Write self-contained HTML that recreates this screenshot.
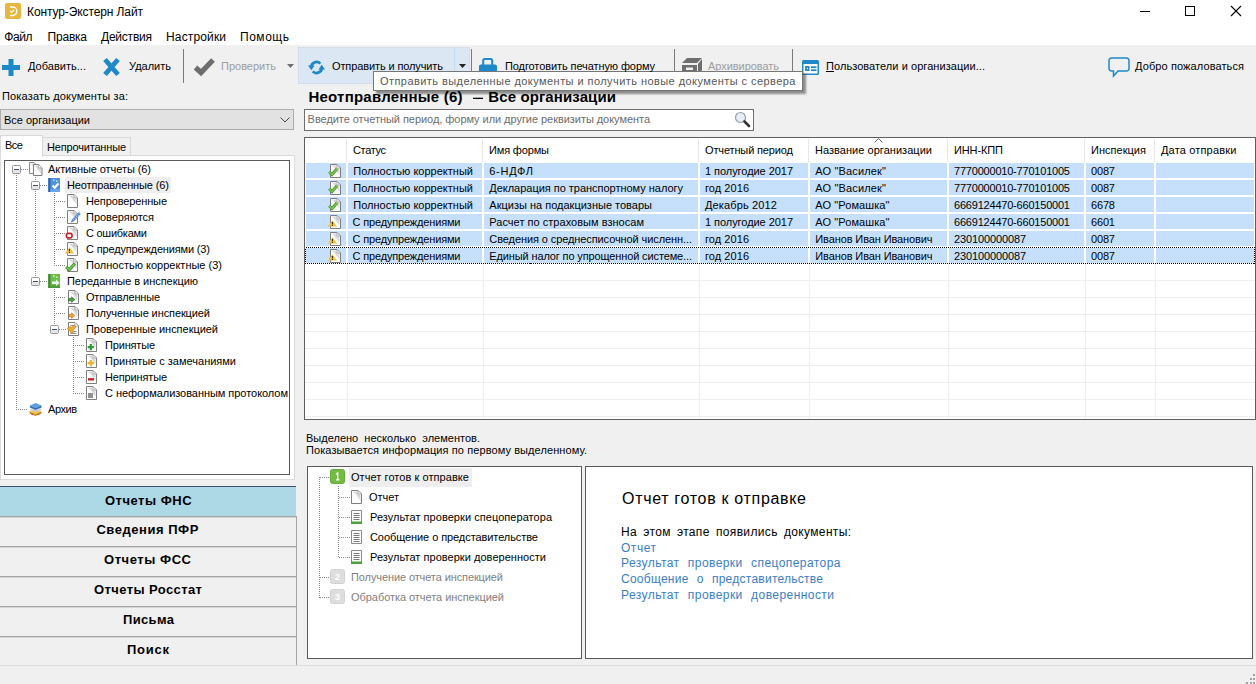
<!DOCTYPE html>
<html><head><meta charset="utf-8"><title>Контур-Экстерн Лайт</title>
<style>
html,body{margin:0;padding:0;}
body{width:1256px;height:684px;position:relative;overflow:hidden;background:#f0f0f0;font-family:"Liberation Sans", sans-serif;}
#root{position:absolute;left:0;top:0;width:1256px;height:684px;overflow:hidden;}
#root div{position:absolute;box-sizing:border-box;}
#root svg{position:absolute;overflow:visible;}
.t{position:absolute;white-space:pre;}
</style></head><body><div id="root">
<div style="left:0px;top:0px;width:1256px;height:45px;background:#fff"></div>
<div style="left:0px;top:45px;width:1256px;height:639px;background:#f0f0f0"></div>
<svg style="left:5px;top:3px" width="16" height="16" viewBox="0 0 16 16"><rect x="0" y="0" width="16" height="16" rx="2" fill="#e6b73c"/><path d="M5 4h2.500a4.300 4.300 0 0 1 0 8.600H5" fill="none" stroke="#fff" stroke-width="1.500"/><path d="M5.300 8l1.400 1.300 2.300-2.300" fill="none" stroke="#fff" stroke-width="1.200"/></svg>
<svg style="left:1140px;top:5px" width="12" height="12"><path d="M0 6.5H10" stroke="#000" stroke-width="1"/></svg>
<svg style="left:1185px;top:6px" width="12" height="12"><rect x="0.5" y="0.5" width="9" height="9" fill="none" stroke="#000" stroke-width="1"/></svg>
<svg style="left:1231px;top:6px" width="12" height="12"><path d="M0 0L10 10M10 0L0 10" stroke="#000" stroke-width="1.1"/></svg>
<div style="left:298px;top:47px;width:172px;height:37px;background:#dbe7f3;border:1px dotted #c3d8f0"></div>
<div style="left:454px;top:48px;width:1px;height:35px;background:#c6daf0"></div>
<div style="left:183px;top:49px;width:1px;height:34px;background:#7a7a7a"></div>
<div style="left:471px;top:49px;width:1px;height:34px;background:#7a7a7a"></div>
<div style="left:674px;top:49px;width:1px;height:34px;background:#7a7a7a"></div>
<div style="left:792px;top:49px;width:1px;height:34px;background:#7a7a7a"></div>
<svg style="left:2px;top:59px" width="18" height="17"><path d="M6.5 0h5v6h6.5v5h-6.5v6h-5v-6H0v-5h6.5z" fill="#1e88c9"/></svg>
<svg style="left:103px;top:59px" width="17" height="16"><path d="M2 0.5L15 15.5M15 0.5L2 15.5" stroke="#1e88c9" stroke-width="4.8"/></svg>
<svg style="left:194px;top:58px" width="21" height="17"><path d="M1.5 9.5L7 14.5L19 2" stroke="#6e6e6e" stroke-width="5.2" fill="none"/></svg>
<svg style="left:287px;top:64px" width="8" height="5"><path d="M0 0h7L3.5 4z" fill="#707070"/></svg>
<svg style="left:308px;top:59px" width="18" height="17" viewBox="0 0 18 17"><path d="M3.200 8.500A5.300 5.300 0 0 1 12.300 4.600" stroke="#1e88c9" stroke-width="2.800" fill="none"/><path d="M0 6.500h6.600L3.300 11.300z" fill="#1e88c9"/><path d="M13.800 8.500A5.300 5.300 0 0 1 4.700 12.400" stroke="#1e88c9" stroke-width="2.800" fill="none"/><path d="M10.400 10.500H17L13.700 5.700z" fill="#1e88c9"/></svg>
<svg style="left:459px;top:64px" width="8" height="5"><path d="M0 0h7L3.5 4z" fill="#222"/></svg>
<svg style="left:479px;top:57px" width="19" height="18" viewBox="0 0 19 18"><path d="M4.200 8V3.500a1.500 1.500 0 0 1 1.500-1.500h6a1.500 1.500 0 0 1 1.500 1.500V8" fill="#f0f0f0" stroke="#1e88c9" stroke-width="2"/><rect x="0" y="7.500" width="18" height="8.500" rx="1.800" fill="#1e88c9"/></svg>
<svg style="left:681px;top:57px" width="21" height="18" viewBox="0 0 21 18"><path d="M1 6L6 1h15l-5 5z" fill="#6e6e6e"/><path d="M1 8h15v10H1z" fill="#6e6e6e"/><path d="M17 7l4-5v11l-4 5z" fill="#6e6e6e"/><rect x="5" y="10.5" width="7" height="2.5" fill="#f0f0f0"/></svg>
<svg style="left:802px;top:60px" width="17" height="15" viewBox="0 0 17 15"><rect x="0" y="0" width="17" height="15" rx="1.500" fill="#1e88c9"/><rect x="1.500" y="4" width="14" height="9.500" fill="#fff"/><rect x="3" y="6" width="4.500" height="5" fill="#1e88c9"/><rect x="4.700" y="7.800" width="1.200" height="1.400" fill="#fff"/><rect x="9" y="6.300" width="5.500" height="1.800" fill="#1e88c9"/><rect x="9" y="9.300" width="5.500" height="1.800" fill="#1e88c9"/></svg>
<svg style="left:1108px;top:57px" width="22" height="21" viewBox="0 0 22 21"><path d="M3.5 1h15a2.5 2.5 0 0 1 2.5 2.5v8a2.5 2.5 0 0 1-2.5 2.5H10l-4.5 5v-5h-2A2.5 2.5 0 0 1 1 11.500v-8A2.5 2.500 0 0 1 3.5 1z" fill="none" stroke="#1e88c9" stroke-width="1.5"/></svg>
<div style="left:0px;top:109px;width:294px;height:21px;background:#e2e2e2;border:1px solid #adadad"></div>
<svg style="left:280px;top:117px" width="10" height="6"><path d="M0.500 0.500L5 5L9.500 0.500" stroke="#444" stroke-width="1" fill="none"/></svg>
<div style="left:0px;top:155px;width:295px;height:325px;background:#fff;border:1px solid #dcdcdc;border-top:1px solid #d9d9d9"></div>
<div style="left:42px;top:137px;width:89px;height:19px;background:#f0f0f0;border:1px solid #d9d9d9"></div>
<div style="left:0px;top:135px;width:43px;height:22px;background:#fff;border:1px solid #d9d9d9;border-bottom:0"></div>
<div style="left:4px;top:160px;width:286px;height:315px;background:#fff;border:1px solid #5a5a5a"></div>
<div style="left:65px;top:177px;width:106px;height:16px;background:#eeeeee"></div>
<div style="left:16px;top:175px;width:1px;height:235px;background:repeating-linear-gradient(to bottom,#8a8a8a 0 1px,transparent 1px 2px)"></div>
<div style="left:35px;top:177px;width:1px;height:105px;background:repeating-linear-gradient(to bottom,#8a8a8a 0 1px,transparent 1px 2px)"></div>
<div style="left:54px;top:193px;width:1px;height:73px;background:repeating-linear-gradient(to bottom,#8a8a8a 0 1px,transparent 1px 2px)"></div>
<div style="left:54px;top:289px;width:1px;height:41px;background:repeating-linear-gradient(to bottom,#8a8a8a 0 1px,transparent 1px 2px)"></div>
<div style="left:73px;top:337px;width:1px;height:57px;background:repeating-linear-gradient(to bottom,#8a8a8a 0 1px,transparent 1px 2px)"></div>
<div style="left:21px;top:169px;width:7px;height:1px;background:repeating-linear-gradient(to right,#8a8a8a 0 1px,transparent 1px 2px)"></div>
<svg style="left:12px;top:165px" width="9" height="9"><rect x="0.5" y="0.5" width="8" height="8" rx="1" fill="#fff" stroke="#969696"/><rect x="1" y="5" width="7" height="3" fill="#e6e6e6"/><path d="M2 4.5h5" stroke="#3d4f74"/></svg>
<svg style="left:29px;top:161px" width="16" height="16" viewBox="0 0 16 16"><path d="M0.500 1.500h4.500l2.500 2.500v8.500h-7z" fill="#fcfcfc" stroke="#8a8a8a"/><path d="M1.500 2.500h3l2 2.500v4z" fill="#dcdcdc"/><path d="M4.500 3.500h5l3.500 3.500v7.500h-8.500z" fill="#fcfcfc" stroke="#7f7f7f"/><path d="M5.500 4.500h4l2.500 3v5l-4-5z" fill="#d9dadc"/><path d="M9.500 3.500v3.500h3.500z" fill="#fff" stroke="#9a9a9a" stroke-width="0.7"/></svg>
<div style="left:40px;top:185px;width:7px;height:1px;background:repeating-linear-gradient(to right,#8a8a8a 0 1px,transparent 1px 2px)"></div>
<svg style="left:31px;top:181px" width="9" height="9"><rect x="0.5" y="0.5" width="8" height="8" rx="1" fill="#fff" stroke="#969696"/><rect x="1" y="5" width="7" height="3" fill="#e6e6e6"/><path d="M2 4.5h5" stroke="#3d4f74"/></svg>
<svg style="left:48px;top:177px" width="16" height="16" viewBox="0 0 16 16"><rect x="0.500" y="1" width="11.500" height="14" fill="#4f93e0"/><rect x="0.500" y="1" width="2" height="14" fill="#2f6bbd"/><path d="M0 2h1.500M0 4h1.500M0 6h1.500M0 8h1.500M0 10h1.500M0 12h1.500M0 14h1.500" stroke="#1d4f94" stroke-width="0.8"/><rect x="2.500" y="12" width="9.500" height="3" fill="#6aa6ea"/><path d="M4.500 8.500l2.200 2.200L10.500 6.500" stroke="#fff" stroke-width="2.200" fill="none"/><rect x="5" y="2.500" width="1.500" height="1.500" fill="#cfe6ff"/><rect x="8" y="3.500" width="1.500" height="1.500" fill="#cfe6ff"/></svg>
<div style="left:54px;top:201px;width:12px;height:1px;background:repeating-linear-gradient(to right,#8a8a8a 0 1px,transparent 1px 2px)"></div>
<svg style="left:67px;top:193px" width="16" height="16" viewBox="0 0 16 16"><path d="M0.500 1.500h6.500l3.500 3.500v9.500h-10z" fill="#fcfcfc" stroke="#7f7f7f"/><path d="M1.500 2.500h5.500l2.500 3v6l-5-6.500z" fill="#d9dadc"/><path d="M7 1.500v3.500h3.500z" fill="#fff" stroke="#9a9a9a" stroke-width="0.7"/></svg>
<div style="left:54px;top:217px;width:12px;height:1px;background:repeating-linear-gradient(to right,#8a8a8a 0 1px,transparent 1px 2px)"></div>
<svg style="left:67px;top:209px" width="16" height="16" viewBox="0 0 16 16"><path d="M0.500 1.500h6.500l3.500 3.500v9.500h-10z" fill="#fcfcfc" stroke="#7f7f7f"/><path d="M1.500 2.500h5.500l2.500 3v6l-5-6.500z" fill="#d9dadc"/><path d="M7 1.500v3.500h3.500z" fill="#fff" stroke="#9a9a9a" stroke-width="0.7"/><path d="M4.300 13.200l1-2.800 6.500-7 1.600 1.500-6.500 7z" fill="#5b8fdc" stroke="#3a6ab8" stroke-width="0.5"/><path d="M6 10l1.500 1.500M7.500 8.500L9 10M9 7l1.500 1.500M10.500 5.500L12 7" stroke="#cfe0f7" stroke-width="0.6"/></svg>
<div style="left:54px;top:233px;width:12px;height:1px;background:repeating-linear-gradient(to right,#8a8a8a 0 1px,transparent 1px 2px)"></div>
<svg style="left:67px;top:225px" width="16" height="16" viewBox="0 0 16 16"><path d="M0.500 1.500h6.500l3.500 3.500v9.500h-10z" fill="#fcfcfc" stroke="#7f7f7f"/><path d="M1.500 2.500h5.500l2.500 3v6l-5-6.500z" fill="#d9dadc"/><path d="M7 1.500v3.500h3.500z" fill="#fff" stroke="#9a9a9a" stroke-width="0.7"/><rect x="-0.600" y="8.300" width="5.600" height="4.600" rx="1.600" fill="#fff" stroke="#c8202a" stroke-width="1.700"/></svg>
<div style="left:54px;top:249px;width:12px;height:1px;background:repeating-linear-gradient(to right,#8a8a8a 0 1px,transparent 1px 2px)"></div>
<svg style="left:67px;top:241px" width="16" height="16" viewBox="0 0 16 16"><path d="M0.500 1.500h6.500l3.500 3.500v9.500h-10z" fill="#fcfcfc" stroke="#7f7f7f"/><path d="M1.500 2.500h5.500l2.500 3v6l-5-6.500z" fill="#d9dadc"/><path d="M7 1.500v3.500h3.500z" fill="#fff" stroke="#9a9a9a" stroke-width="0.7"/><path d="M2.400 6.200L7 12.600H-2.200z" fill="#efc03a"/><rect x="1.900" y="8" width="1.100" height="2.300" fill="#3a2a00"/><rect x="1.900" y="11" width="1.100" height="1" fill="#3a2a00"/></svg>
<div style="left:54px;top:265px;width:12px;height:1px;background:repeating-linear-gradient(to right,#8a8a8a 0 1px,transparent 1px 2px)"></div>
<svg style="left:67px;top:257px" width="16" height="16" viewBox="0 0 16 16"><path d="M0.500 1.500h6.500l3.500 3.500v9.500h-10z" fill="#fcfcfc" stroke="#7f7f7f"/><path d="M1.500 2.500h5.500l2.500 3v6l-5-6.500z" fill="#d9dadc"/><path d="M7 1.500v3.500h3.500z" fill="#fff" stroke="#9a9a9a" stroke-width="0.7"/><path d="M-0.800 9.800L2.300 12.800L7.800 6.500" stroke="#3f8f2f" stroke-width="3" fill="none"/><path d="M-0.800 9.800L2.300 12.800L7.800 6.500" stroke="#7cc655" stroke-width="1.300" fill="none"/></svg>
<div style="left:40px;top:281px;width:7px;height:1px;background:repeating-linear-gradient(to right,#8a8a8a 0 1px,transparent 1px 2px)"></div>
<svg style="left:31px;top:277px" width="9" height="9"><rect x="0.5" y="0.5" width="8" height="8" rx="1" fill="#fff" stroke="#969696"/><rect x="1" y="5" width="7" height="3" fill="#e6e6e6"/><path d="M2 4.5h5" stroke="#3d4f74"/></svg>
<svg style="left:48px;top:273px" width="16" height="16" viewBox="0 0 16 16"><rect x="0.500" y="1" width="11.500" height="14" fill="#6cc04a"/><rect x="0.500" y="1" width="2" height="14" fill="#3f8f2c"/><path d="M0 2h1.500M0 4h1.500M0 6h1.500M0 8h1.500M0 10h1.500M0 12h1.500M0 14h1.500" stroke="#2a6a1c" stroke-width="0.8"/><rect x="2.500" y="12.500" width="9.500" height="2.500" fill="#4f9a3a"/><path d="M4 8.500h4v-2l3.500 3.200L8 13v-2H4z" fill="#f4f8f2"/><rect x="5" y="2.500" width="1.500" height="1.500" fill="#d9f5cc"/><rect x="8" y="3.500" width="1.500" height="1.500" fill="#d9f5cc"/></svg>
<div style="left:54px;top:297px;width:12px;height:1px;background:repeating-linear-gradient(to right,#8a8a8a 0 1px,transparent 1px 2px)"></div>
<svg style="left:68px;top:289px" width="16" height="16" viewBox="0 0 16 16"><path d="M0.500 1.500h6.500l3.500 3.500v9.500h-10z" fill="#fcfcfc" stroke="#7f7f7f"/><path d="M1.500 2.500h5.500l2.500 3v6l-5-6.500z" fill="#d9dadc"/><path d="M7 1.500v3.500h3.500z" fill="#fff" stroke="#9a9a9a" stroke-width="0.7"/><path d="M0.800 9.400h2.800V7.900l3.300 2.700-3.300 2.700v-1.500H0.800z" fill="#4aa23a" stroke="#1f5a1a" stroke-width="0.6"/></svg>
<div style="left:54px;top:313px;width:12px;height:1px;background:repeating-linear-gradient(to right,#8a8a8a 0 1px,transparent 1px 2px)"></div>
<svg style="left:68px;top:305px" width="16" height="16" viewBox="0 0 16 16"><path d="M0.500 1.500h6.500l3.500 3.500v9.500h-10z" fill="#fcfcfc" stroke="#7f7f7f"/><path d="M1.500 2.500h5.500l2.500 3v6l-5-6.500z" fill="#d9dadc"/><path d="M7 1.500v3.500h3.500z" fill="#fff" stroke="#9a9a9a" stroke-width="0.7"/><path d="M0.800 9.400h2.800V7.900l3.300 2.700-3.300 2.700v-1.500H0.800z" fill="#f0a83a" stroke="#b06a10" stroke-width="0.6"/></svg>
<div style="left:59px;top:329px;width:7px;height:1px;background:repeating-linear-gradient(to right,#8a8a8a 0 1px,transparent 1px 2px)"></div>
<svg style="left:50px;top:325px" width="9" height="9"><rect x="0.5" y="0.5" width="8" height="8" rx="1" fill="#fff" stroke="#969696"/><rect x="1" y="5" width="7" height="3" fill="#e6e6e6"/><path d="M2 4.5h5" stroke="#3d4f74"/></svg>
<svg style="left:68px;top:321px" width="16" height="16" viewBox="0 0 16 16"><path d="M0.500 1.500h6.500l3.500 3.500v9.500h-10z" fill="#fcfcfc" stroke="#7f7f7f"/><path d="M7 1.500v3.500h3.500z" fill="#fff" stroke="#9a9a9a" stroke-width="0.7"/><path d="M2.500 4.500h4M2.500 10.500h6M2.500 12.500h6" stroke="#8f8f8f"/><path d="M-1 7.500l3-2 1.500 1 3-2.500 1.500 2-3 3 .5 2.500-2.500 1-1-2.500z" fill="#f0a92e" stroke="#c07a10" stroke-width="0.5"/></svg>
<div style="left:73px;top:345px;width:12px;height:1px;background:repeating-linear-gradient(to right,#8a8a8a 0 1px,transparent 1px 2px)"></div>
<svg style="left:86px;top:337px" width="16" height="16" viewBox="0 0 16 16"><path d="M0.500 1.500h6.500l3.500 3.500v9.500h-10z" fill="#fcfcfc" stroke="#7f7f7f"/><path d="M1.500 2.500h5.500l2.500 3v6l-5-6.500z" fill="#d9dadc"/><path d="M7 1.500v3.500h3.500z" fill="#fff" stroke="#9a9a9a" stroke-width="0.7"/><path d="M3.700 7h2.200v2h2v2.200h-2v2H3.700v-2h-2V9h2z" fill="#2f9a35"/></svg>
<div style="left:73px;top:361px;width:12px;height:1px;background:repeating-linear-gradient(to right,#8a8a8a 0 1px,transparent 1px 2px)"></div>
<svg style="left:86px;top:353px" width="16" height="16" viewBox="0 0 16 16"><path d="M0.500 1.500h6.500l3.500 3.500v9.500h-10z" fill="#fcfcfc" stroke="#7f7f7f"/><path d="M1.500 2.500h5.500l2.500 3v6l-5-6.500z" fill="#d9dadc"/><path d="M7 1.500v3.500h3.500z" fill="#fff" stroke="#9a9a9a" stroke-width="0.7"/><path d="M3.700 7h2.200v2h2v2.200h-2v2H3.700v-2h-2V9h2z" fill="#efb422"/></svg>
<div style="left:73px;top:377px;width:12px;height:1px;background:repeating-linear-gradient(to right,#8a8a8a 0 1px,transparent 1px 2px)"></div>
<svg style="left:86px;top:369px" width="16" height="16" viewBox="0 0 16 16"><path d="M0.500 1.500h6.500l3.500 3.500v9.500h-10z" fill="#fcfcfc" stroke="#7f7f7f"/><path d="M1.500 2.500h5.500l2.500 3v6l-5-6.500z" fill="#d9dadc"/><path d="M7 1.500v3.500h3.500z" fill="#fff" stroke="#9a9a9a" stroke-width="0.7"/><rect x="2" y="9.200" width="6" height="2.300" fill="#c01c24"/></svg>
<div style="left:73px;top:393px;width:12px;height:1px;background:repeating-linear-gradient(to right,#8a8a8a 0 1px,transparent 1px 2px)"></div>
<svg style="left:86px;top:385px" width="16" height="16" viewBox="0 0 16 16"><path d="M0.500 1.500h6.500l3.500 3.500v9.500h-10z" fill="#fcfcfc" stroke="#7f7f7f"/><path d="M1.500 2.500h5.500l2.500 3v6l-5-6.500z" fill="#d9dadc"/><path d="M7 1.500v3.500h3.500z" fill="#fff" stroke="#9a9a9a" stroke-width="0.7"/><rect x="2" y="8" width="5" height="5" fill="#8f8f8f"/></svg>
<div style="left:16px;top:409px;width:12px;height:1px;background:repeating-linear-gradient(to right,#8a8a8a 0 1px,transparent 1px 2px)"></div>
<svg style="left:29px;top:401px" width="16" height="16" viewBox="0 0 16 16"><path d="M0.500 10.500l6-2 6 2-6 2.500z" fill="#f3c64a"/><path d="M0.500 10.500v2l6 2.500 6-2.500v-2l-6 2.500z" fill="#d08a1a"/><path d="M2.500 13.200l1.500.6M9 13.600l1.500-.6" stroke="#b03020" stroke-width="0.8"/><path d="M1.500 7.500l5-2 5.500 2-5.500 2z" fill="#f0f0f0"/><path d="M1.500 7.500v1.800l5 2 5.500-2V7.500l-5.500 2z" fill="#c9c9c9"/><path d="M1 4.500l5.500-2.500 6 2.500-6 2.500z" fill="#5aa0e0"/><path d="M1 4.500v2l5.500 2.500 6-2.500v-2l-6 2.500z" fill="#2f6fb8"/></svg>
<div style="left:0px;top:486px;width:296px;height:30px;background:#add8e6;border-top:1px solid #3b4f6b"></div>
<div style="left:0px;top:516px;width:297px;height:30px;background:#f0f0f0;border-top:1px solid #a6a6a6;border-right:1px solid #a6a6a6"></div>
<div style="left:0px;top:517px;width:296px;height:1px;background:#d4d4d4"></div>
<div style="left:0px;top:546px;width:297px;height:30px;background:#f0f0f0;border-top:1px solid #a6a6a6;border-right:1px solid #a6a6a6"></div>
<div style="left:0px;top:547px;width:296px;height:1px;background:#d4d4d4"></div>
<div style="left:0px;top:576px;width:297px;height:30px;background:#f0f0f0;border-top:1px solid #a6a6a6;border-right:1px solid #a6a6a6"></div>
<div style="left:0px;top:577px;width:296px;height:1px;background:#d4d4d4"></div>
<div style="left:0px;top:606px;width:297px;height:30px;background:#f0f0f0;border-top:1px solid #a6a6a6;border-right:1px solid #a6a6a6"></div>
<div style="left:0px;top:607px;width:296px;height:1px;background:#d4d4d4"></div>
<div style="left:0px;top:636px;width:297px;height:30px;background:#f0f0f0;border-top:1px solid #a6a6a6;border-right:1px solid #a6a6a6"></div>
<div style="left:0px;top:637px;width:296px;height:1px;background:#d4d4d4"></div>
<div style="left:0px;top:665px;width:297px;height:1px;background:#a0a0a0"></div>
<div style="left:473px;top:98px;width:10px;height:1px;background:#000"></div>
<div style="left:473px;top:97px;width:10px;height:1px;background:rgba(0,0,0,0.3)"></div>
<div style="left:304px;top:109px;width:450px;height:22px;background:#fff;border:1px solid #6e6e6e"></div>
<svg style="left:734px;top:111px" width="17" height="17" viewBox="0 0 17 17"><circle cx="6.5" cy="6.500" r="5" fill="#e6eff7" stroke="#9aa2aa" stroke-width="1.200"/><path d="M10.5 10.5L15 15" stroke="#333" stroke-width="2.6" stroke-linecap="round"/></svg>
<div style="left:304px;top:137px;width:952px;height:283px;background:#fff;border:1px solid #5f5f5f"></div>
<div style="left:305px;top:280px;width:950px;height:1px;background:#eeeeee"></div>
<div style="left:305px;top:297px;width:950px;height:1px;background:#eeeeee"></div>
<div style="left:305px;top:314px;width:950px;height:1px;background:#eeeeee"></div>
<div style="left:305px;top:331px;width:950px;height:1px;background:#eeeeee"></div>
<div style="left:305px;top:348px;width:950px;height:1px;background:#eeeeee"></div>
<div style="left:305px;top:365px;width:950px;height:1px;background:#eeeeee"></div>
<div style="left:305px;top:382px;width:950px;height:1px;background:#eeeeee"></div>
<div style="left:305px;top:399px;width:950px;height:1px;background:#eeeeee"></div>
<div style="left:305px;top:416px;width:950px;height:1px;background:#eeeeee"></div>
<div style="left:346px;top:139px;width:1px;height:23px;background:repeating-linear-gradient(to bottom,#dcdcdc 0 1px,#f2f2f2 1px 2px)"></div>
<div style="left:347px;top:263px;width:1px;height:156px;background:#eeeeee"></div>
<div style="left:482px;top:139px;width:1px;height:23px;background:repeating-linear-gradient(to bottom,#dcdcdc 0 1px,#f2f2f2 1px 2px)"></div>
<div style="left:483px;top:263px;width:1px;height:156px;background:#eeeeee"></div>
<div style="left:698px;top:139px;width:1px;height:23px;background:repeating-linear-gradient(to bottom,#dcdcdc 0 1px,#f2f2f2 1px 2px)"></div>
<div style="left:699px;top:263px;width:1px;height:156px;background:#eeeeee"></div>
<div style="left:808px;top:139px;width:1px;height:23px;background:repeating-linear-gradient(to bottom,#dcdcdc 0 1px,#f2f2f2 1px 2px)"></div>
<div style="left:809px;top:263px;width:1px;height:156px;background:#eeeeee"></div>
<div style="left:947px;top:139px;width:1px;height:23px;background:repeating-linear-gradient(to bottom,#dcdcdc 0 1px,#f2f2f2 1px 2px)"></div>
<div style="left:948px;top:263px;width:1px;height:156px;background:#eeeeee"></div>
<div style="left:1084px;top:139px;width:1px;height:23px;background:repeating-linear-gradient(to bottom,#dcdcdc 0 1px,#f2f2f2 1px 2px)"></div>
<div style="left:1085px;top:263px;width:1px;height:156px;background:#eeeeee"></div>
<div style="left:1154px;top:139px;width:1px;height:23px;background:repeating-linear-gradient(to bottom,#dcdcdc 0 1px,#f2f2f2 1px 2px)"></div>
<div style="left:1155px;top:263px;width:1px;height:156px;background:#eeeeee"></div>
<svg style="left:874px;top:138px" width="10" height="5"><path d="M0.5 4.5L4.500 0.5L8.500 4.500" stroke="#666" fill="none"/></svg>
<div style="left:306px;top:163px;width:948px;height:15px;background:#c6e0fc"></div>
<div style="left:346px;top:163px;width:2px;height:15px;background:#fff"></div>
<div style="left:482px;top:163px;width:2px;height:15px;background:#fff"></div>
<div style="left:698px;top:163px;width:2px;height:15px;background:#fff"></div>
<div style="left:808px;top:163px;width:2px;height:15px;background:#fff"></div>
<div style="left:947px;top:163px;width:2px;height:15px;background:#fff"></div>
<div style="left:1084px;top:163px;width:2px;height:15px;background:#fff"></div>
<div style="left:1154px;top:163px;width:2px;height:15px;background:#fff"></div>
<svg style="left:326px;top:163px" width="16" height="16" viewBox="0 0 16 16"><g transform="translate(4,0)"><path d="M0.500 1.500h6.500l3.500 3.500v9.500h-10z" fill="#fcfcfc" stroke="#7f7f7f"/><path d="M1.500 2.500h5.500l2.500 3v6l-5-6.500z" fill="#d9dadc"/><path d="M7 1.500v3.500h3.500z" fill="#fff" stroke="#9a9a9a" stroke-width="0.7"/></g><path d="M3.200 8.800L6 11.600L11 5.800" stroke="#4a9a2e" stroke-width="3" fill="none"/><path d="M3.200 8.800L6 11.600L11 5.800" stroke="#86c95a" stroke-width="1.300" fill="none"/></svg>
<div style="left:306px;top:180px;width:948px;height:15px;background:#c6e0fc"></div>
<div style="left:346px;top:180px;width:2px;height:15px;background:#fff"></div>
<div style="left:482px;top:180px;width:2px;height:15px;background:#fff"></div>
<div style="left:698px;top:180px;width:2px;height:15px;background:#fff"></div>
<div style="left:808px;top:180px;width:2px;height:15px;background:#fff"></div>
<div style="left:947px;top:180px;width:2px;height:15px;background:#fff"></div>
<div style="left:1084px;top:180px;width:2px;height:15px;background:#fff"></div>
<div style="left:1154px;top:180px;width:2px;height:15px;background:#fff"></div>
<svg style="left:326px;top:180px" width="16" height="16" viewBox="0 0 16 16"><g transform="translate(4,0)"><path d="M0.500 1.500h6.500l3.500 3.500v9.500h-10z" fill="#fcfcfc" stroke="#7f7f7f"/><path d="M1.500 2.500h5.500l2.500 3v6l-5-6.500z" fill="#d9dadc"/><path d="M7 1.500v3.500h3.500z" fill="#fff" stroke="#9a9a9a" stroke-width="0.7"/></g><path d="M3.200 8.800L6 11.600L11 5.800" stroke="#4a9a2e" stroke-width="3" fill="none"/><path d="M3.200 8.800L6 11.600L11 5.800" stroke="#86c95a" stroke-width="1.300" fill="none"/></svg>
<div style="left:306px;top:197px;width:948px;height:15px;background:#c6e0fc"></div>
<div style="left:346px;top:197px;width:2px;height:15px;background:#fff"></div>
<div style="left:482px;top:197px;width:2px;height:15px;background:#fff"></div>
<div style="left:698px;top:197px;width:2px;height:15px;background:#fff"></div>
<div style="left:808px;top:197px;width:2px;height:15px;background:#fff"></div>
<div style="left:947px;top:197px;width:2px;height:15px;background:#fff"></div>
<div style="left:1084px;top:197px;width:2px;height:15px;background:#fff"></div>
<div style="left:1154px;top:197px;width:2px;height:15px;background:#fff"></div>
<svg style="left:326px;top:197px" width="16" height="16" viewBox="0 0 16 16"><g transform="translate(4,0)"><path d="M0.500 1.500h6.500l3.500 3.500v9.500h-10z" fill="#fcfcfc" stroke="#7f7f7f"/><path d="M1.500 2.500h5.500l2.500 3v6l-5-6.500z" fill="#d9dadc"/><path d="M7 1.500v3.500h3.500z" fill="#fff" stroke="#9a9a9a" stroke-width="0.7"/></g><path d="M3.200 8.800L6 11.600L11 5.800" stroke="#4a9a2e" stroke-width="3" fill="none"/><path d="M3.200 8.800L6 11.600L11 5.800" stroke="#86c95a" stroke-width="1.300" fill="none"/></svg>
<div style="left:306px;top:214px;width:948px;height:15px;background:#c6e0fc"></div>
<div style="left:346px;top:214px;width:2px;height:15px;background:#fff"></div>
<div style="left:482px;top:214px;width:2px;height:15px;background:#fff"></div>
<div style="left:698px;top:214px;width:2px;height:15px;background:#fff"></div>
<div style="left:808px;top:214px;width:2px;height:15px;background:#fff"></div>
<div style="left:947px;top:214px;width:2px;height:15px;background:#fff"></div>
<div style="left:1084px;top:214px;width:2px;height:15px;background:#fff"></div>
<div style="left:1154px;top:214px;width:2px;height:15px;background:#fff"></div>
<svg style="left:326px;top:214px" width="16" height="16" viewBox="0 0 16 16"><g transform="translate(4,0)"><path d="M0.500 1.500h6.500l3.500 3.500v9.500h-10z" fill="#fcfcfc" stroke="#7f7f7f"/><path d="M1.500 2.500h5.500l2.500 3v6l-5-6.500z" fill="#d9dadc"/><path d="M7 1.500v3.500h3.500z" fill="#fff" stroke="#9a9a9a" stroke-width="0.7"/></g><path d="M6.400 6.200L11 12.600H1.800z" fill="#efc03a"/><rect x="5.900" y="8" width="1.100" height="2.300" fill="#3a2a00"/><rect x="5.900" y="11" width="1.100" height="1" fill="#3a2a00"/></svg>
<div style="left:306px;top:231px;width:948px;height:15px;background:#c6e0fc"></div>
<div style="left:346px;top:231px;width:2px;height:15px;background:#fff"></div>
<div style="left:482px;top:231px;width:2px;height:15px;background:#fff"></div>
<div style="left:698px;top:231px;width:2px;height:15px;background:#fff"></div>
<div style="left:808px;top:231px;width:2px;height:15px;background:#fff"></div>
<div style="left:947px;top:231px;width:2px;height:15px;background:#fff"></div>
<div style="left:1084px;top:231px;width:2px;height:15px;background:#fff"></div>
<div style="left:1154px;top:231px;width:2px;height:15px;background:#fff"></div>
<svg style="left:326px;top:231px" width="16" height="16" viewBox="0 0 16 16"><g transform="translate(4,0)"><path d="M0.500 1.500h6.500l3.500 3.500v9.500h-10z" fill="#fcfcfc" stroke="#7f7f7f"/><path d="M1.500 2.500h5.500l2.500 3v6l-5-6.500z" fill="#d9dadc"/><path d="M7 1.500v3.500h3.500z" fill="#fff" stroke="#9a9a9a" stroke-width="0.7"/></g><path d="M6.400 6.200L11 12.600H1.800z" fill="#efc03a"/><rect x="5.900" y="8" width="1.100" height="2.300" fill="#3a2a00"/><rect x="5.900" y="11" width="1.100" height="1" fill="#3a2a00"/></svg>
<div style="left:306px;top:248px;width:948px;height:15px;background:#c6e0fc"></div>
<div style="left:346px;top:248px;width:2px;height:15px;background:#fff"></div>
<div style="left:482px;top:248px;width:2px;height:15px;background:#fff"></div>
<div style="left:698px;top:248px;width:2px;height:15px;background:#fff"></div>
<div style="left:808px;top:248px;width:2px;height:15px;background:#fff"></div>
<div style="left:947px;top:248px;width:2px;height:15px;background:#fff"></div>
<div style="left:1084px;top:248px;width:2px;height:15px;background:#fff"></div>
<div style="left:1154px;top:248px;width:2px;height:15px;background:#fff"></div>
<svg style="left:326px;top:248px" width="16" height="16" viewBox="0 0 16 16"><g transform="translate(4,0)"><path d="M0.500 1.500h6.500l3.500 3.500v9.500h-10z" fill="#fcfcfc" stroke="#7f7f7f"/><path d="M1.500 2.500h5.500l2.500 3v6l-5-6.500z" fill="#d9dadc"/><path d="M7 1.500v3.500h3.500z" fill="#fff" stroke="#9a9a9a" stroke-width="0.7"/></g><path d="M6.400 6.200L11 12.600H1.800z" fill="#efc03a"/><rect x="5.900" y="8" width="1.100" height="2.300" fill="#3a2a00"/><rect x="5.900" y="11" width="1.100" height="1" fill="#3a2a00"/></svg>
<svg style="left:305px;top:247px" width="950" height="17"><rect x="0.5" y="0.5" width="949" height="16" fill="none" stroke="#000" stroke-width="1" stroke-dasharray="1 1" shape-rendering="crispEdges"/></svg>
<div style="left:307px;top:466px;width:275px;height:193px;background:#fff;border:1px solid #5a5a5a"></div>
<div style="left:349px;top:468px;width:123px;height:19px;background:#eeeeee"></div>
<div style="left:320px;top:477px;width:10px;height:1px;background:repeating-linear-gradient(to right,#8a8a8a 0 1px,transparent 1px 2px)"></div>
<svg style="left:330px;top:469px" width="16" height="16" viewBox="0 0 16 16"><rect x="0.500" y="0.500" width="14" height="14" rx="2" fill="#74ba45" stroke="#62ad38"/><path d="M6 5.300L7.700 4v6.800M6 10.900h3.500" stroke="#fff" stroke-width="1.300" fill="none"/></svg>
<div style="left:339px;top:497px;width:11px;height:1px;background:repeating-linear-gradient(to right,#8a8a8a 0 1px,transparent 1px 2px)"></div>
<svg style="left:351px;top:489px" width="16" height="16" viewBox="0 0 16 16"><path d="M0.500 1.500h6.500l3.500 3.500v9.500h-10z" fill="#fcfcfc" stroke="#7f7f7f"/><path d="M1.500 2.500h5.500l2.500 3v6l-5-6.500z" fill="#d9dadc"/><path d="M7 1.500v3.500h3.500z" fill="#fff" stroke="#9a9a9a" stroke-width="0.7"/></svg>
<div style="left:339px;top:517px;width:11px;height:1px;background:repeating-linear-gradient(to right,#8a8a8a 0 1px,transparent 1px 2px)"></div>
<svg style="left:351px;top:509px" width="16" height="16" viewBox="0 0 16 16"><path d="M0.500 1.500h10v13h-10z" fill="#fcfcfc" stroke="#8a8a8a"/><path d="M2.500 4.500h6M2.500 6.500h6M2.500 8.500h6M2.500 10.500h6" stroke="#7a7a7a"/><rect x="0" y="12.500" width="11" height="2.500" fill="#4aa23a"/></svg>
<div style="left:339px;top:537px;width:11px;height:1px;background:repeating-linear-gradient(to right,#8a8a8a 0 1px,transparent 1px 2px)"></div>
<svg style="left:351px;top:529px" width="16" height="16" viewBox="0 0 16 16"><path d="M0.500 1.500h10v13h-10z" fill="#fcfcfc" stroke="#8a8a8a"/><path d="M2.500 4.500h6M2.500 6.500h6M2.500 8.500h6M2.500 10.500h6M2.500 12.500h6" stroke="#7a7a7a"/></svg>
<div style="left:339px;top:557px;width:11px;height:1px;background:repeating-linear-gradient(to right,#8a8a8a 0 1px,transparent 1px 2px)"></div>
<svg style="left:351px;top:549px" width="16" height="16" viewBox="0 0 16 16"><path d="M0.500 1.500h10v13h-10z" fill="#fcfcfc" stroke="#8a8a8a"/><path d="M2.500 4.500h6M2.500 6.500h6M2.500 8.500h6M2.500 10.500h6" stroke="#7a7a7a"/><rect x="0" y="12.500" width="11" height="2.500" fill="#4aa23a"/></svg>
<div style="left:320px;top:577px;width:10px;height:1px;background:repeating-linear-gradient(to right,#8a8a8a 0 1px,transparent 1px 2px)"></div>
<svg style="left:330px;top:569px" width="16" height="16" viewBox="0 0 16 16"><rect x="0.500" y="0.500" width="14" height="14" rx="2" fill="#dedede" stroke="#d2d2d2"/><text x="7.500" y="11.200" font-size="9.500" font-family="Liberation Sans" font-weight="bold" fill="#fff" text-anchor="middle">2</text></svg>
<div style="left:320px;top:597px;width:10px;height:1px;background:repeating-linear-gradient(to right,#8a8a8a 0 1px,transparent 1px 2px)"></div>
<svg style="left:330px;top:589px" width="16" height="16" viewBox="0 0 16 16"><rect x="0.500" y="0.500" width="14" height="14" rx="2" fill="#dedede" stroke="#d2d2d2"/><text x="7.500" y="11.200" font-size="9.500" font-family="Liberation Sans" font-weight="bold" fill="#fff" text-anchor="middle">3</text></svg>
<div style="left:319px;top:477px;width:1px;height:121px;background:repeating-linear-gradient(to bottom,#8a8a8a 0 1px,transparent 1px 2px)"></div>
<div style="left:338px;top:486px;width:1px;height:72px;background:repeating-linear-gradient(to bottom,#8a8a8a 0 1px,transparent 1px 2px)"></div>
<div style="left:585px;top:466px;width:668px;height:193px;background:#fff;border:1px solid #5a5a5a"></div>
<div style="left:0px;top:665px;width:1256px;height:1px;background:#dcdcdc"></div>
<div style="left:1253px;top:674px;width:2px;height:2px;background:#a3a3a3"></div>
<div style="left:1250px;top:678px;width:2px;height:2px;background:#a3a3a3"></div>
<div style="left:1253px;top:678px;width:2px;height:2px;background:#a3a3a3"></div>
<div style="left:1246px;top:682px;width:2px;height:2px;background:#a3a3a3"></div>
<div style="left:1250px;top:682px;width:2px;height:2px;background:#a3a3a3"></div>
<div style="left:1253px;top:682px;width:2px;height:2px;background:#a3a3a3"></div>
<div style="left:373px;top:71px;width:430px;height:20px;background:#fff;border:1px solid #767676;box-shadow:3px 3px 2px rgba(0,0,0,0.42)"></div>
<span class="t" style="left:27px;top:4px;font-size:12px;line-height:16px;font-weight:normal;color:#000;letter-spacing:-0.105px;">Контур-Экстерн Лайт</span>
<span class="t" style="left:4.3px;top:29px;font-size:12px;line-height:16px;font-weight:normal;color:#000;letter-spacing:-0.472px;">Файл</span>
<span class="t" style="left:47.6px;top:29px;font-size:12px;line-height:16px;font-weight:normal;color:#000;letter-spacing:-0.229px;">Правка</span>
<span class="t" style="left:101px;top:29px;font-size:12px;line-height:16px;font-weight:normal;color:#000;letter-spacing:-0.225px;">Действия</span>
<span class="t" style="left:166px;top:29px;font-size:12px;line-height:16px;font-weight:normal;color:#000;letter-spacing:0.145px;">Настройки</span>
<span class="t" style="left:240px;top:29px;font-size:12px;line-height:16px;font-weight:normal;color:#000;letter-spacing:0.528px;">Помощь</span>
<span class="t" style="left:28px;top:59px;font-size:11px;line-height:15px;font-weight:normal;color:#000;letter-spacing:0.02px;">Добавить...</span>
<span class="t" style="left:129px;top:59px;font-size:11px;line-height:15px;font-weight:normal;color:#000;letter-spacing:0.0px;">Удалить</span>
<span class="t" style="left:221px;top:59px;font-size:11px;line-height:15px;font-weight:normal;color:#9d9d9d;letter-spacing:-0.002px;">Проверить</span>
<span class="t" style="left:332px;top:59px;font-size:11px;line-height:15px;font-weight:normal;color:#000;letter-spacing:-0.116px;">Отправить и получить</span>
<span class="t" style="left:505px;top:59px;font-size:11px;line-height:15px;font-weight:normal;color:#000;letter-spacing:-0.096px;">Подготовить печатную форму</span>
<span class="t" style="left:708px;top:59px;font-size:11px;line-height:15px;font-weight:normal;color:#9d9d9d;letter-spacing:-0.053px;">Архивировать</span>
<span class="t" style="left:826px;top:59px;font-size:11px;line-height:15px;font-weight:normal;color:#000;letter-spacing:0.06px;"><u>П</u>ользователи и организации...</span>
<span class="t" style="left:1135px;top:59px;font-size:11px;line-height:15px;font-weight:normal;color:#000;letter-spacing:0.106px;">Добро пожаловаться</span>
<span class="t" style="left:2px;top:89px;font-size:11px;line-height:15px;font-weight:normal;color:#000;letter-spacing:0.16px;">Показать документы за:</span>
<span class="t" style="left:4px;top:113px;font-size:11px;line-height:15px;font-weight:normal;color:#000;letter-spacing:-0.008px;">Все организации</span>
<span class="t" style="left:5px;top:138px;font-size:11px;line-height:15px;font-weight:normal;color:#000;letter-spacing:-0.484px;">Все</span>
<span class="t" style="left:47px;top:140px;font-size:11px;line-height:15px;font-weight:normal;color:#000;letter-spacing:-0.174px;">Непрочитанные</span>
<span class="t" style="left:48px;top:162px;font-size:11px;line-height:15px;font-weight:normal;color:#000;letter-spacing:-0.072px;">Активные отчеты (6)</span>
<span class="t" style="left:67px;top:178px;font-size:11px;line-height:15px;font-weight:normal;color:#000;letter-spacing:-0.116px;">Неотправленные (6)</span>
<span class="t" style="left:86px;top:194px;font-size:11px;line-height:15px;font-weight:normal;color:#000;letter-spacing:-0.125px;">Непроверенные</span>
<span class="t" style="left:86px;top:210px;font-size:11px;line-height:15px;font-weight:normal;color:#000;letter-spacing:-0.031px;">Проверяются</span>
<span class="t" style="left:86px;top:226px;font-size:11px;line-height:15px;font-weight:normal;color:#000;letter-spacing:-0.253px;">С ошибками</span>
<span class="t" style="left:86px;top:242px;font-size:11px;line-height:15px;font-weight:normal;color:#000;letter-spacing:-0.153px;">С предупреждениями (3)</span>
<span class="t" style="left:86px;top:258px;font-size:11px;line-height:15px;font-weight:normal;color:#000;letter-spacing:0.002px;">Полностью корректные (3)</span>
<span class="t" style="left:67px;top:274px;font-size:11px;line-height:15px;font-weight:normal;color:#000;letter-spacing:-0.047px;">Переданные в инспекцию</span>
<span class="t" style="left:86px;top:290px;font-size:11px;line-height:15px;font-weight:normal;color:#000;letter-spacing:-0.19px;">Отправленные</span>
<span class="t" style="left:86px;top:306px;font-size:11px;line-height:15px;font-weight:normal;color:#000;letter-spacing:-0.105px;">Полученные инспекцией</span>
<span class="t" style="left:86px;top:322px;font-size:11px;line-height:15px;font-weight:normal;color:#000;letter-spacing:-0.036px;">Проверенные инспекцией</span>
<span class="t" style="left:105px;top:338px;font-size:11px;line-height:15px;font-weight:normal;color:#000;letter-spacing:-0.181px;">Принятые</span>
<span class="t" style="left:105px;top:354px;font-size:11px;line-height:15px;font-weight:normal;color:#000;letter-spacing:-0.004px;">Принятые с замечаниями</span>
<span class="t" style="left:105px;top:370px;font-size:11px;line-height:15px;font-weight:normal;color:#000;letter-spacing:-0.153px;">Непринятые</span>
<span class="t" style="left:105px;top:386px;font-size:11px;line-height:15px;font-weight:normal;color:#000;letter-spacing:-0.045px;">С неформализованным протоколом</span>
<span class="t" style="left:48px;top:402px;font-size:11px;line-height:15px;font-weight:normal;color:#000;letter-spacing:-0.457px;">Архив</span>
<span class="t" style="left:105px;top:492px;font-size:13px;line-height:17px;font-weight:bold;color:#000;letter-spacing:0.506px;">Отчеты ФНС</span>
<span class="t" style="left:96.4px;top:521px;font-size:13px;line-height:17px;font-weight:bold;color:#000;letter-spacing:0.538px;">Сведения ПФР</span>
<span class="t" style="left:104px;top:551px;font-size:13px;line-height:17px;font-weight:bold;color:#000;letter-spacing:0.55px;">Отчеты ФСС</span>
<span class="t" style="left:94px;top:581px;font-size:13px;line-height:17px;font-weight:bold;color:#000;letter-spacing:0.406px;">Отчеты Росстат</span>
<span class="t" style="left:123px;top:611px;font-size:13px;line-height:17px;font-weight:bold;color:#000;letter-spacing:0.353px;">Письма</span>
<span class="t" style="left:127px;top:641px;font-size:13px;line-height:17px;font-weight:bold;color:#000;letter-spacing:0.746px;">Поиск</span>
<span class="t" style="left:308.5px;top:87px;font-size:15px;line-height:19px;font-weight:bold;color:#000;letter-spacing:0.22px;">Неотправленные (6)</span>
<span class="t" style="left:488.3px;top:87px;font-size:15px;line-height:19px;font-weight:bold;color:#000;letter-spacing:0.11px;">Все организации</span>
<span class="t" style="left:307.6px;top:112px;font-size:11px;line-height:15px;font-weight:normal;color:#6d6d6d;letter-spacing:-0.049px;">Введите отчетный период, форму или другие реквизиты документа</span>
<span class="t" style="left:353px;top:143px;font-size:11px;line-height:15px;font-weight:normal;color:#000;letter-spacing:-0.356px;">Статус</span>
<span class="t" style="left:489px;top:143px;font-size:11px;line-height:15px;font-weight:normal;color:#000;letter-spacing:-0.156px;">Имя формы</span>
<span class="t" style="left:705px;top:143px;font-size:11px;line-height:15px;font-weight:normal;color:#000;letter-spacing:-0.138px;">Отчетный период</span>
<span class="t" style="left:815px;top:143px;font-size:11px;line-height:15px;font-weight:normal;color:#000;letter-spacing:0.036px;">Название организации</span>
<span class="t" style="left:954px;top:143px;font-size:11px;line-height:15px;font-weight:normal;color:#000;letter-spacing:-0.115px;">ИНН-КПП</span>
<span class="t" style="left:1091px;top:143px;font-size:11px;line-height:15px;font-weight:normal;color:#000;letter-spacing:0.027px;">Инспекция</span>
<span class="t" style="left:1161px;top:143px;font-size:11px;line-height:15px;font-weight:normal;color:#000;letter-spacing:0.164px;">Дата отправки</span>
<span class="t" style="left:353.3px;top:164px;font-size:11px;line-height:15px;font-weight:normal;color:#000;letter-spacing:0.011px;">Полностью корректный</span>
<span class="t" style="left:489.3px;top:164px;font-size:11px;line-height:15px;font-weight:normal;color:#000;letter-spacing:0.709px;">6-НДФЛ</span>
<span class="t" style="left:705px;top:164px;font-size:11px;line-height:15px;font-weight:normal;color:#000;letter-spacing:-0.052px;">1 полугодие 2017</span>
<span class="t" style="left:815.3px;top:164px;font-size:11px;line-height:15px;font-weight:normal;color:#000;letter-spacing:0.157px;">АО &quot;Василек&quot;</span>
<span class="t" style="left:954px;top:164px;font-size:11px;line-height:15px;font-weight:normal;color:#000;letter-spacing:-0.206px;">7770000010-770101005</span>
<span class="t" style="left:1091px;top:164px;font-size:11px;line-height:15px;font-weight:normal;color:#000;letter-spacing:-0.161px;">0087</span>
<span class="t" style="left:353.3px;top:181px;font-size:11px;line-height:15px;font-weight:normal;color:#000;letter-spacing:0.011px;">Полностью корректный</span>
<span class="t" style="left:489.3px;top:181px;font-size:11px;line-height:15px;font-weight:normal;color:#000;letter-spacing:-0.024px;">Декларация по транспортному налогу</span>
<span class="t" style="left:705px;top:181px;font-size:11px;line-height:15px;font-weight:normal;color:#000;letter-spacing:0.058px;">год 2016</span>
<span class="t" style="left:815.3px;top:181px;font-size:11px;line-height:15px;font-weight:normal;color:#000;letter-spacing:0.157px;">АО &quot;Василек&quot;</span>
<span class="t" style="left:954px;top:181px;font-size:11px;line-height:15px;font-weight:normal;color:#000;letter-spacing:-0.206px;">7770000010-770101005</span>
<span class="t" style="left:1091px;top:181px;font-size:11px;line-height:15px;font-weight:normal;color:#000;letter-spacing:-0.161px;">0087</span>
<span class="t" style="left:353.3px;top:198px;font-size:11px;line-height:15px;font-weight:normal;color:#000;letter-spacing:0.011px;">Полностью корректный</span>
<span class="t" style="left:489.3px;top:198px;font-size:11px;line-height:15px;font-weight:normal;color:#000;letter-spacing:0.005px;">Акцизы на подакцизные товары</span>
<span class="t" style="left:705px;top:198px;font-size:11px;line-height:15px;font-weight:normal;color:#000;letter-spacing:0.143px;">Декабрь 2012</span>
<span class="t" style="left:815.3px;top:198px;font-size:11px;line-height:15px;font-weight:normal;color:#000;letter-spacing:0.093px;">АО &quot;Ромашка&quot;</span>
<span class="t" style="left:954px;top:198px;font-size:11px;line-height:15px;font-weight:normal;color:#000;letter-spacing:-0.206px;">6669124470-660150001</span>
<span class="t" style="left:1091px;top:198px;font-size:11px;line-height:15px;font-weight:normal;color:#000;letter-spacing:-0.161px;">6678</span>
<span class="t" style="left:352.6px;top:215px;font-size:11px;line-height:15px;font-weight:normal;color:#000;letter-spacing:-0.166px;">С предупреждениями</span>
<span class="t" style="left:489.3px;top:215px;font-size:11px;line-height:15px;font-weight:normal;color:#000;letter-spacing:0.029px;">Расчет по страховым взносам</span>
<span class="t" style="left:705px;top:215px;font-size:11px;line-height:15px;font-weight:normal;color:#000;letter-spacing:-0.052px;">1 полугодие 2017</span>
<span class="t" style="left:815.3px;top:215px;font-size:11px;line-height:15px;font-weight:normal;color:#000;letter-spacing:0.093px;">АО &quot;Ромашка&quot;</span>
<span class="t" style="left:954px;top:215px;font-size:11px;line-height:15px;font-weight:normal;color:#000;letter-spacing:-0.206px;">6669124470-660150001</span>
<span class="t" style="left:1091px;top:215px;font-size:11px;line-height:15px;font-weight:normal;color:#000;letter-spacing:-0.161px;">6601</span>
<span class="t" style="left:352.6px;top:232px;font-size:11px;line-height:15px;font-weight:normal;color:#000;letter-spacing:-0.166px;">С предупреждениями</span>
<span class="t" style="left:489.3px;top:232px;font-size:11px;line-height:15px;font-weight:normal;color:#000;letter-spacing:-0.093px;">Сведения о среднесписочной численн...</span>
<span class="t" style="left:705px;top:232px;font-size:11px;line-height:15px;font-weight:normal;color:#000;letter-spacing:0.058px;">год 2016</span>
<span class="t" style="left:815.3px;top:232px;font-size:11px;line-height:15px;font-weight:normal;color:#000;letter-spacing:-0.114px;">Иванов Иван Иванович</span>
<span class="t" style="left:954px;top:232px;font-size:11px;line-height:15px;font-weight:normal;color:#000;letter-spacing:-0.129px;">230100000087</span>
<span class="t" style="left:1091px;top:232px;font-size:11px;line-height:15px;font-weight:normal;color:#000;letter-spacing:-0.161px;">0087</span>
<span class="t" style="left:352.6px;top:249px;font-size:11px;line-height:15px;font-weight:normal;color:#000;letter-spacing:-0.166px;">С предупреждениями</span>
<span class="t" style="left:489.3px;top:249px;font-size:11px;line-height:15px;font-weight:normal;color:#000;letter-spacing:-0.13px;">Единый налог по упрощенной системе...</span>
<span class="t" style="left:705px;top:249px;font-size:11px;line-height:15px;font-weight:normal;color:#000;letter-spacing:0.058px;">год 2016</span>
<span class="t" style="left:815.3px;top:249px;font-size:11px;line-height:15px;font-weight:normal;color:#000;letter-spacing:-0.114px;">Иванов Иван Иванович</span>
<span class="t" style="left:954px;top:249px;font-size:11px;line-height:15px;font-weight:normal;color:#000;letter-spacing:-0.129px;">230100000087</span>
<span class="t" style="left:1091px;top:249px;font-size:11px;line-height:15px;font-weight:normal;color:#000;letter-spacing:-0.161px;">0087</span>
<span class="t" style="left:306px;top:431px;font-size:11px;line-height:15px;font-weight:normal;color:#000;letter-spacing:0.011px;">Выделено  несколько  элементов.</span>
<span class="t" style="left:306px;top:443px;font-size:11px;line-height:15px;font-weight:normal;color:#000;letter-spacing:0.088px;">Показывается информация по первому выделенному.</span>
<span class="t" style="left:351px;top:470px;font-size:11px;line-height:15px;font-weight:normal;color:#000;letter-spacing:0.065px;">Отчет готов к отправке</span>
<span class="t" style="left:369px;top:490px;font-size:11px;line-height:15px;font-weight:normal;color:#000;letter-spacing:-0.031px;">Отчет</span>
<span class="t" style="left:370px;top:510px;font-size:11px;line-height:15px;font-weight:normal;color:#000;letter-spacing:0.05px;">Результат проверки спецоператора</span>
<span class="t" style="left:370px;top:530px;font-size:11px;line-height:15px;font-weight:normal;color:#000;letter-spacing:-0.078px;">Сообщение о представительстве</span>
<span class="t" style="left:370px;top:550px;font-size:11px;line-height:15px;font-weight:normal;color:#000;letter-spacing:0.04px;">Результат проверки доверенности</span>
<span class="t" style="left:351px;top:570px;font-size:11px;line-height:15px;font-weight:normal;color:#7f7f7f;letter-spacing:-0.106px;">Получение отчета инспекцией</span>
<span class="t" style="left:351px;top:590px;font-size:11px;line-height:15px;font-weight:normal;color:#7f7f7f;letter-spacing:-0.052px;">Обработка отчета инспекцией</span>
<span class="t" style="left:622px;top:489px;font-size:16px;line-height:20px;font-weight:normal;color:#000;letter-spacing:0.684px;">Отчет готов к отправке</span>
<span class="t" style="left:621px;top:524px;font-size:12px;line-height:16px;font-weight:normal;color:#000;letter-spacing:0.348px;word-spacing:2.5px;">На этом этапе появились документы:</span>
<span class="t" style="left:621px;top:540px;font-size:12px;line-height:16px;font-weight:normal;color:#3a7ec6;letter-spacing:0.535px;">Отчет</span>
<span class="t" style="left:621px;top:555px;font-size:12px;line-height:16px;font-weight:normal;color:#3a7ec6;letter-spacing:0.433px;word-spacing:4.6px;">Результат проверки спецоператора</span>
<span class="t" style="left:621px;top:571px;font-size:12px;line-height:16px;font-weight:normal;color:#3a7ec6;letter-spacing:0.256px;word-spacing:4.6px;">Сообщение о представительстве</span>
<span class="t" style="left:621px;top:587px;font-size:12px;line-height:16px;font-weight:normal;color:#3a7ec6;letter-spacing:0.436px;word-spacing:4.6px;">Результат проверки доверенности</span>
<span class="t" style="left:380px;top:74px;font-size:11px;line-height:15px;font-weight:normal;color:#575757;letter-spacing:0.437px;">Отправить выделенные документы и получить новые документы с сервера</span>
</div></body></html>
